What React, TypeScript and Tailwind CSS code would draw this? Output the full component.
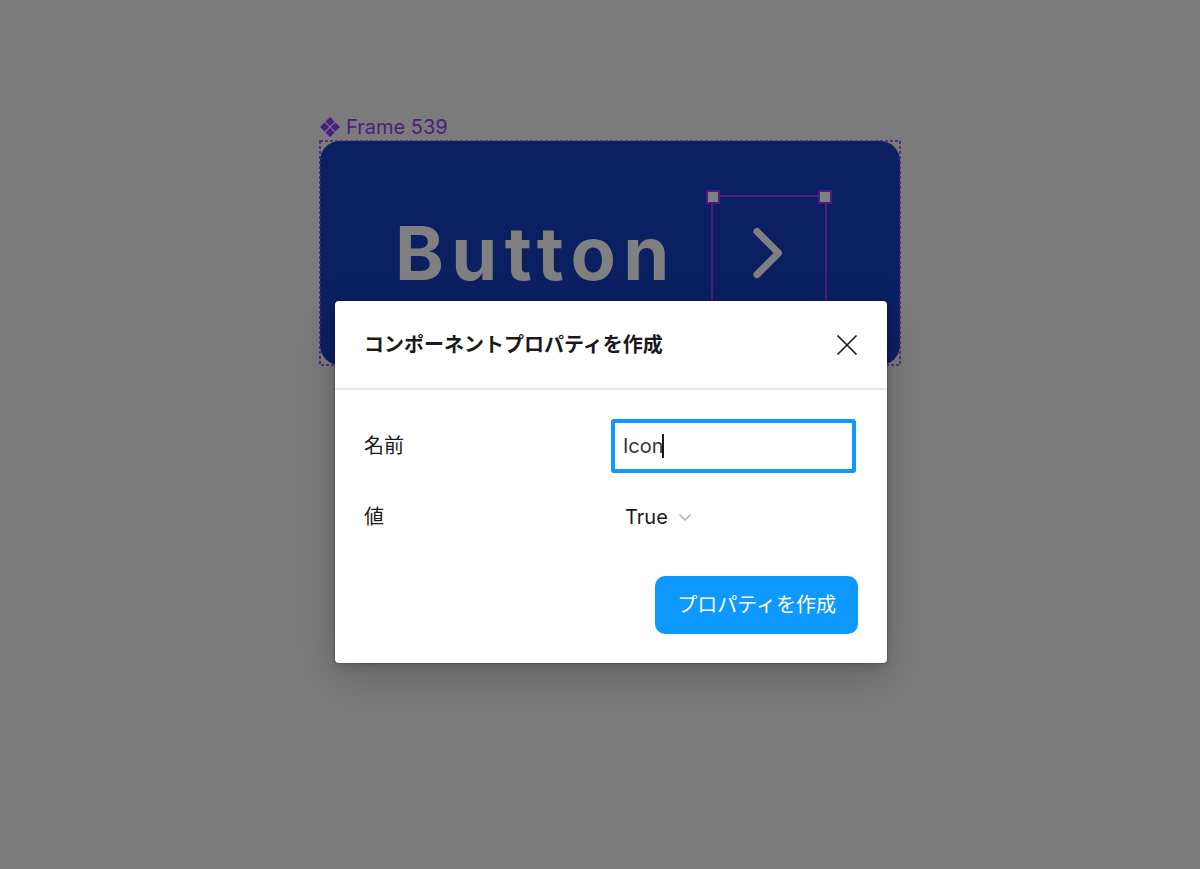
import { useState } from 'react';

const fontStack = "font-['Inter','Noto_Sans_CJK_JP',sans-serif]";

function ComponentIcon() {
  return (
    <svg width="20" height="20" viewBox="0 0 20 20" fill="currentColor" aria-hidden="true">
      <path d="M10 0l4.6 4.6L10 9.2 5.4 4.6zM4.6 5.4L9.2 10l-4.6 4.6L0 10zM15.4 5.4L20 10l-4.6 4.6L10.8 10zM10 10.8l4.6 4.6L10 20l-4.6-4.6z" />
    </svg>
  );
}

function SelectedIcon() {
  return (
    <div className="relative size-[116px] border-2 border-[#4b1d82]">
      <svg className="size-full" viewBox="0 0 112 112" fill="none" aria-hidden="true">
        <path
          d="M44 34.5L65.5 56L44 77.5"
          stroke="#808080"
          strokeWidth="7"
          strokeLinecap="round"
          strokeLinejoin="round"
        />
      </svg>
      <span className="absolute -top-[7px] -left-[7px] size-[14px] border-2 border-[#4b1d82] bg-[#808080]" />
      <span className="absolute -top-[7px] -right-[7px] size-[14px] border-2 border-[#4b1d82] bg-[#808080]" />
    </div>
  );
}

function PropertyDialog() {
  const [name, setName] = useState('Icon');
  const [value, setValue] = useState('True');

  return (
    <div
      role="dialog"
      aria-labelledby="dialog-title"
      className="absolute right-[13px] left-[15px] top-[160px] rounded bg-white text-xl text-[#1a1a1a] shadow-[0_0_2px_rgba(0,0,0,0.5),0_4px_10px_rgba(0,0,0,0.12),0_14px_44px_rgba(0,0,0,0.18)]"
    >
      <div className="flex h-[89px] items-center justify-between border-b-2 border-[#e8e8e8] px-[29px]">
        <h2 id="dialog-title" className="font-semibold">
          コンポーネントプロパティを作成
        </h2>
        <button type="button" aria-label="閉じる" className="cursor-pointer">
          <svg width="22" height="22" viewBox="0 0 22 22" fill="none" stroke="#1a1a1a" strokeWidth="1.7" aria-hidden="true">
            <path d="M1.5 1.5l19 19M20.5 1.5l-19 19" />
          </svg>
        </button>
      </div>

      <form className="px-[29px] pt-[29px] pb-[29px]" onSubmit={(e) => e.preventDefault()}>
        <div className="grid grid-cols-2 items-center gap-y-4">
          <label htmlFor="prop-name">名前</label>
          <div className="relative mr-0.5">
            <input
              id="prop-name"
              type="text"
              value={name}
              onChange={(e) => setName(e.target.value)}
              className="h-[54px] w-full rounded-[3px] border-4 border-[#0d99ff] bg-white px-2 text-[#333] caret-transparent outline-none"
            />
            <span className="pointer-events-none absolute inset-y-0 left-3 flex items-center">
              <span className="invisible">{name}</span>
              <span className="-ml-0.5 h-6 w-0.5 bg-[#1a1a1a]" />
            </span>
          </div>

          <label htmlFor="prop-value">値</label>
          <div className="relative flex h-14 items-center">
            <select
              id="prop-value"
              value={value}
              onChange={(e) => setValue(e.target.value)}
              className="cursor-pointer appearance-none bg-transparent pr-6 pl-[14px] outline-none"
            >
              <option>True</option>
              <option>False</option>
            </select>
            <svg className="pointer-events-none -ml-5" width="12" height="8" viewBox="0 0 12 8" fill="none" stroke="#b0b0b0" strokeWidth="1.5" aria-hidden="true">
              <path d="M0.5 1.5L6 7l5.5-5.5" />
            </svg>
          </div>
        </div>

        <div className="mt-[31px] flex justify-end">
          <button
            type="submit"
            className="h-[58px] cursor-pointer rounded-[10px] bg-[#0d99ff] px-[22px] text-white"
          >
            プロパティを作成
          </button>
        </div>
      </form>
    </div>
  );
}

export default function App() {
  return (
    <main className={`min-h-screen bg-[#7b7b7b] pt-28 pl-5 ${fontStack}`}>
      <div className="mx-auto w-full max-w-[580px]">
        <div className="flex h-[29px] items-center gap-1.5 text-xl text-[#4b1d82]">
          <ComponentIcon />
          <span>Frame 539</span>
        </div>

        <div className="relative">
          <div className="flex h-[224px] items-center justify-between rounded-[20px] bg-[#0a2061] pr-[73px] pl-[75px]">
            <span className="text-[74px] font-bold tracking-widest text-[#808080]">Button</span>
            <SelectedIcon />
          </div>
          <svg className="pointer-events-none absolute inset-0 size-full overflow-visible" fill="none" aria-hidden="true">
            <rect width="100%" height="100%" stroke="#4b1d82" strokeWidth="1.6" strokeDasharray="3 2" />
          </svg>
          <PropertyDialog />
        </div>
      </div>
    </main>
  );
}
